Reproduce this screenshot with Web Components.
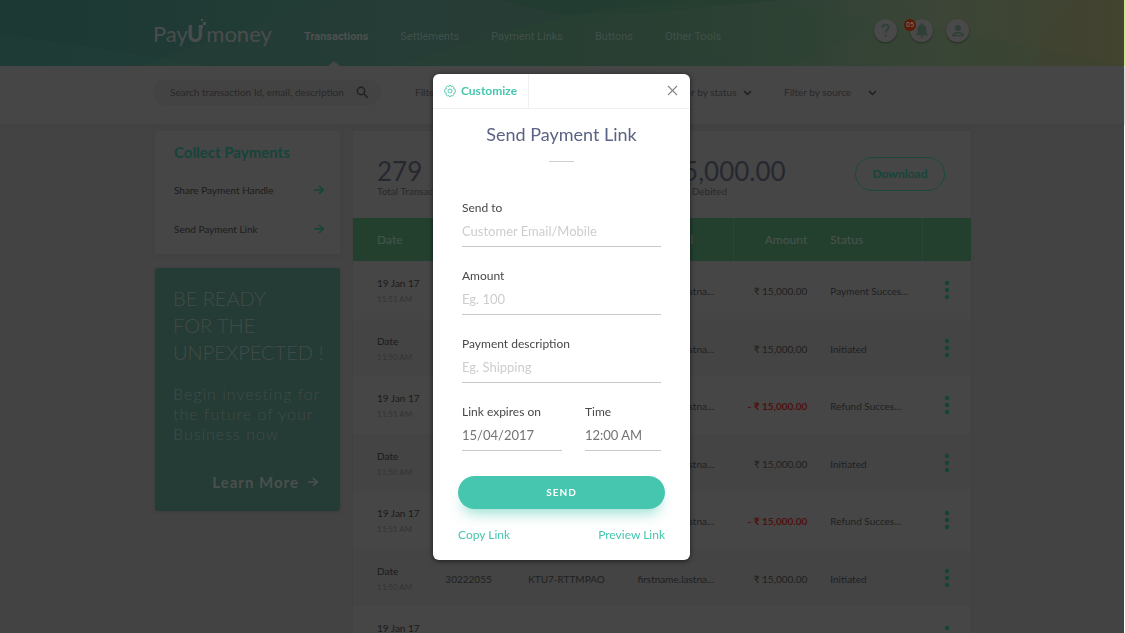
<!DOCTYPE html>
<html lang="en">
<head>
<meta charset="utf-8">
<meta name="viewport" content="width=device-width, initial-scale=1">
<title>PayUmoney – Send Payment Link</title>
<style>
  html, body { margin: 0; height: 100%; }
  body { font-family: Lato, "Liberation Sans", sans-serif; background: #fff; color: #222; overflow: hidden; }
</style>
</head>
<body>
<pay-app></pay-app>

<script>
const define = (name, html, setup) => {
  const template = document.createElement('template');
  template.innerHTML = html;
  customElements.define(name, class extends HTMLElement {
    constructor() {
      super();
      this.attachShadow({ mode: 'open' }).append(template.content.cloneNode(true));
    }
    connectedCallback() { if (setup) setup(this, this.shadowRoot); }
  });
};

define('pay-logo', `
  <style>
    :host { display: block; }
    a { display: flex; align-items: baseline; position: relative; color: #4b4d4c; text-decoration: none; font: 400 22px/28px Lato, sans-serif; }
    b { font-weight: 900; margin: 0 3px 0 -1px; }
    svg { position: absolute; left: 46px; top: -1px; }
  </style>
  <a href="#" aria-label="PayUmoney"><span>Pay</span><b>U</b><span>money</span>
    <svg width="8" height="9" viewBox="0 0 8 9" fill="#4b4d4c" aria-hidden="true"><path d="M2 0h2v2H2zM4 3h3v3H4zM0 6h4v3H0z"/></svg>
  </a>`);

define('nav-link', `
  <style>
    :host { display: flex; position: relative; align-items: center; }
    a { color: #42504a; text-decoration: none; font: 400 11px/16px Roboto, sans-serif; }
    :host([current]) a { color: #4d504f; font-weight: 700; }
    :host([current])::after { content: ""; position: absolute; left: 50%; bottom: 0; margin-left: -8px; border: 6px solid transparent; border-top: 0; border-bottom: 5px solid #464646; }
  </style>
  <a href="#"><slot></slot></a>`);

define('round-button', `
  <style>
    :host { display: block; position: relative; }
    button { display: grid; place-items: center; width: 23px; height: 23px; padding: 0; border: 0; border-radius: 50%; background: #484948; color: #2f3f36; box-shadow: 0 1px 2px #0005; }
    span { position: absolute; left: -6px; top: 0; width: 12px; height: 12px; border-radius: 50%; background: #591d05; color: #94705f; font: 400 7px/12px Roboto, sans-serif; text-align: center; }
    span:empty { display: none; }
  </style>
  <button type="button"><slot></slot></button><span></span>`,
  (host, root) => {
    root.querySelector('button').setAttribute('aria-label', host.getAttribute('label'));
    root.querySelector('span').textContent = host.getAttribute('count') || '';
  });

define('app-header', `
  <style>
    :host { display: block; position: relative; background: linear-gradient(90deg, #1c3933, #233c36 30%, #253c33 50%, #2f4235 72%, #3b4537 82%, #444430); border-right: 1px solid #cdee8c; }
    .art { position: absolute; inset: 0; width: 100%; height: 100%; }
    .in { position: relative; display: flex; max-width: 818px; height: 66px; margin: 0 auto; }
    pay-logo { padding-top: 20px; width: 151px; }
    nav { display: flex; gap: 32px; padding-top: 7px; }
    .tools { display: flex; gap: 13px; margin-left: auto; padding: 19px 2px 0 0; }
  </style>
  <svg class="art" viewBox="0 0 1124 66" preserveAspectRatio="none" aria-hidden="true">
    <path d="M140 66Q260 20 350 0H520Q650 40 740 66z" fill="#2a4039" opacity=".3"/>
    <path d="M0 34Q100 48 210 66H0z" fill="#24423a" opacity=".25"/>
    <path d="M500 0H780L640 14 560 14z" fill="#1d3b2d" opacity=".35"/>
    <path d="M400 66Q560 4 690 2T1124 66z" fill="#2c4433" opacity=".2"/>
    <path d="M790 66 930 0H1124V66z" fill="#3e4836" opacity=".2"/>
    <path d="M1035 66Q1040 20 1075 0H1124V66z" fill="#484529" opacity=".15"/>
  </svg>
  <div class="in">
    <pay-logo></pay-logo>
    <nav aria-label="Main">
      <nav-link current>Transactions</nav-link><nav-link>Settlements</nav-link><nav-link>Payment Links</nav-link><nav-link>Buttons</nav-link><nav-link>Other Tools</nav-link>
    </nav>
    <div class="tools">
      <round-button label="Help"><svg width="15" height="15" viewBox="0 0 15 15" fill="none" stroke="currentColor" stroke-width="1.800"><path d="M4.400 4.600C4.500 2.600 5.800 1.600 7.500 1.600s3.100 1.100 3.100 2.800c0 2.300-3.100 2.400-3.100 5.200"/><path d="M7.500 11.800v2"/></svg></round-button>
      <round-button label="Notifications" count="05"><svg width="14" height="15" viewBox="0 0 14 15" fill="currentColor"><path d="M7 14.600c.9 0 1.500-.6 1.500-1.400h-3c0 .8.6 1.400 1.500 1.400zM11.400 10V6.400C11.400 4.200 10.200 2.500 8.200 2V1.500a1.200 1.200 0 0 0-2.400 0V2C3.800 2.500 2.600 4.200 2.600 6.400V10L1.200 11.500v.8h11.600v-.8z"/></svg></round-button>
      <round-button label="Account"><svg width="14" height="14" viewBox="0 0 14 14" fill="currentColor"><circle cx="7" cy="4" r="2.900"/><path fill-rule="evenodd" d="M1.300 12.300v-1.500C1.300 8.900 5.100 8 7 8s5.700.9 5.700 2.800v1.500zm1.700-1.400h8C10.600 10.100 8.500 9.400 7 9.400s-3.600.7-4 1.500z"/></svg></round-button>
    </div>
  </div>`);

define('filter-select', `
  <style>
    :host { display: grid; align-items: center; }
    select, svg { grid-area: 1 / 1; }
    select { appearance: none; border: 0; padding: 0; margin: 0; background: none; color: #292929; font: 400 10px/16px Lato, sans-serif; }
    svg { justify-self: end; pointer-events: none; margin-top: 2px; }
  </style>
  <select><option></option></select>
  <svg width="9" height="6" viewBox="0 0 9 6" fill="none" stroke="#1e1e1e" stroke-width="1.500" aria-hidden="true"><path d="M1 1l3.500 3.500L8 1"/></svg>`,
  (host, root) => {
    root.querySelector('select').setAttribute('aria-label', host.getAttribute('label'));
    root.querySelector('option').textContent = host.getAttribute('label');
  });

define('filter-bar', `
  <style>
    :host { display: block; background: #464646; box-shadow: 0 1px 2px #40404088; }
    .in { display: flex; align-items: center; max-width: 818px; margin: 0 auto; padding-bottom: 6px; height: 52px; }
    form { display: flex; align-items: center; width: 228px; height: 25px; box-sizing: border-box; padding: 0 12px 0 17px; border-radius: 13px; background: #434343; margin-right: 34px; }
    input { flex: 1; min-width: 0; border: 0; padding: 0; background: none; font: 400 10px/16px Lato, sans-serif; color: #252525; }
    input::placeholder { color: #282828; opacity: 1; }
    button { border: 0; background: none; padding: 0; display: flex; }
    filter-select:nth-of-type(1) { width: 120px; margin-right: 137px; }
    filter-select:nth-of-type(2) { width: 80px; margin-right: 32px; }
    filter-select:nth-of-type(3) { width: 93px; }
  </style>
  <div class="in">
    <form role="search">
      <input type="search" aria-label="Search transactions" placeholder="Search transaction Id, email, description">
      <button type="button" aria-label="Search"><svg width="13" height="13" viewBox="0 0 13 13" fill="none" stroke="#1f1f1f" stroke-width="1.400"><circle cx="5" cy="5" r="3.700"/><path d="M7.800 7.800l4 4"/></svg></button>
    </form>
    <filter-select label="Filter by date"></filter-select>
    <filter-select label="Filter by status"></filter-select>
    <filter-select label="Filter by source"></filter-select>
  </div>`);

define('arrow-icon', `
  <style>:host { display: inline-flex; }</style>
  <svg width="12" height="10" viewBox="0 0 12 10" fill="none" stroke="currentColor" stroke-width="1.700" aria-hidden="true"><path d="M1 5h9M6 1l4.200 4L6 9"/></svg>`);

define('collect-card', `
  <style>
    :host { display: block; box-sizing: border-box; height: 123px; padding: 11px 15px 0 19px; background: #464646; border-radius: 2px; box-shadow: 0 1px 4px #404040; }
    h2 { margin: 0 0 20px; font: 700 15px/20px Lato, sans-serif; color: #15443a; }
    a { display: flex; justify-content: space-between; align-items: center; color: #1c1c1c; text-decoration: none; font: 400 10px/16px Lato, sans-serif; margin-bottom: 23px; }
    arrow-icon { color: #15443a; }
  </style>
  <h2>Collect Payments</h2>
  <a href="#"><span>Share Payment Handle</span><arrow-icon></arrow-icon></a>
  <a href="#"><span>Send Payment Link</span><arrow-icon></arrow-icon></a>`);

define('promo-card', `
  <style>
    :host { display: block; box-sizing: border-box; height: 243px; padding: 17px 0 0 18px; background: #243c35; border-radius: 3px; box-shadow: 0 1px 3px #3338; color: #434b48; }
    h2 { margin: 0 0 18px; font: 300 20px/27px Lato, sans-serif; white-space: nowrap; }
    p { margin: 0; font: 300 16px/20px Lato, sans-serif; letter-spacing: 1px; white-space: nowrap; }
    a { display: flex; justify-content: flex-end; align-items: center; gap: 8px; margin: 26px 21px 0 0; color: #4b4f4d; text-decoration: none; font: 700 15px/24px Lato, sans-serif; letter-spacing: 1px; }
  </style>
  <h2>BE READY<br>FOR THE<br>UNPEXPECTED !</h2>
  <p>Begin investing for<br>the future of your<br>Business now</p>
  <a href="#">Learn More <arrow-icon></arrow-icon></a>`);

define('pay-stat', `
  <style>
    :host { display: block; color: #292929; font: 400 10px/12px Lato, sans-serif; }
    strong { display: block; font: 400 26px/28px Lato, sans-serif; color: #262830; }
  </style>
  <strong><slot name="value"></slot></strong><slot></slot>`);

define('transactions-table', `
  <style>
    :host { display: block; }
    table { width: 100%; table-layout: fixed; border-collapse: collapse; font: 400 10px/16px Lato, sans-serif; color: #202020; }
    th { height: 43px; padding: 0 0 0 12px; box-sizing: border-box; text-align: left; font: 500 12px/16px Lato, sans-serif; color: #46524c; background: #23402f; }
    th.rule { border-left: 1px solid #294535; }
    th:first-child, td:first-child { padding-left: 24px; }
    td { height: 58px; box-sizing: border-box; padding: 2px 0 0 12px; white-space: nowrap; }
    tr:nth-child(even) td { height: 57px; background: #444; }
    td:first-child { vertical-align: top; padding-top: 14px; color: #1a1a1a; }
    td small { display: block; font-size: 8px; color: #343434; }
    th.amount, td.amount { text-align: right; padding-right: 11px; }
    td.neg { color: #500f0f; font-weight: 700; }
    td.act { padding: 0; text-align: center; }
    button { border: 0; padding: 0; background: none; color: #154438; display: inline-flex; vertical-align: middle; }
  </style>
  <table>
    <colgroup><col style="width:13%"><col style="width:13.400%"><col style="width:17.700%"><col style="width:17.400%"><col style="width:13.800%"><col style="width:16.800%"><col></colgroup>
    <thead><tr><th scope="col">Date</th><th scope="col" aria-label="ID"></th><th scope="col" aria-label="Reference"></th><th scope="col">User Email</th><th scope="col" class="rule amount">Amount</th><th scope="col">Status</th><th class="rule"></th></tr></thead>
    <tbody></tbody>
  </table>`,
  (host, root) => {
    const email = 'firstname.lastna...', amount = '₹ 15,000.00';
    const rows = [
      ['19 Jan 17', '11:51 AM', '', '', email, amount, 'Payment Succes...'],
      ['Date', '11:50 AM', '', '', email, amount, 'Initiated'],
      ['19 Jan 17', '11:51 AM', '', '', email, amount, 'Refund Succes...'],
      ['Date', '11:50 AM', '', '', email, amount, 'Initiated'],
      ['19 Jan 17', '11:51 AM', '', '', email, amount, 'Refund Succes...'],
      ['Date', '11:50 AM', '30222055', 'KTU7-RTTMPAO', email, amount, 'Initiated'],
      ['19 Jan 17', '', '', '', '', '', '']
    ];
    root.querySelector('tbody').innerHTML = rows.map(([date, time, id, ref, mail, sum, status]) => {
      const neg = status.startsWith('Refund');
      return `<tr><td>${date}<small>${time}</small></td><td>${id}</td><td>${ref}</td><td>${mail}</td>
        <td class="amount${neg ? ' neg' : ''}">${neg ? '- ' : ''}${sum}</td><td>${status}</td>
        <td class="act"><button type="button" aria-label="Row actions"><svg width="6" height="20" viewBox="0 0 6 20" fill="currentColor"><circle cx="3" cy="3" r="2.200"/><circle cx="3" cy="10" r="2.200"/><circle cx="3" cy="17" r="2.200"/></svg></button></td></tr>`;
    }).join('');
  });

define('transactions-panel', `
  <style>
    :host { display: block; background: #464646; box-shadow: 0 0 4px #404040; }
    .top { display: flex; height: 61px; padding: 26px 26px 0 24px; }
    pay-stat:first-child { width: 291px; }
    button { margin: 0 0 0 auto; width: 90px; height: 34px; box-sizing: border-box; border: 1px solid #1b4a3d; border-radius: 17px; background: none; color: #164539; font: 700 12px/16px Lato, sans-serif; padding: 0; }
  </style>
  <div class="top">
    <pay-stat><span slot="value">279</span>Total Transactions</pay-stat>
    <pay-stat><span slot="value">15,000.00</span>Total Debited</pay-stat>
    <button type="button">Download</button>
  </div>
  <transactions-table></transactions-table>`);

define('form-field', `
  <style>
    :host { display: block; min-width: 0; }
    label { display: block; font: 400 12px/16px Lato, sans-serif; color: #484848; }
    input { display: block; width: 100%; height: 31px; box-sizing: border-box; margin: 0; padding: 0; border: 0; border-bottom: 1px solid #c9c9c9; border-radius: 0; background: none; color: #747474; font: 400 13px/20px Lato, sans-serif; outline: 0; }
    input::placeholder { color: #cdcdcd; opacity: 1; }
  </style>
  <label for="f"></label><input id="f" type="text">`,
  (host, root) => {
    const input = root.querySelector('input');
    root.querySelector('label').textContent = host.getAttribute('label');
    input.placeholder = host.getAttribute('placeholder') || '';
    input.value = host.getAttribute('value') || '';
  });

define('link-dialog', `
  <style>
    :host { position: fixed; inset: 0 2px 0 0; display: flex; align-items: center; justify-content: center; }
    section { width: 257px; background: #fff; border-radius: 6px; box-shadow: 0 1px 5px #0009; }
    header { display: flex; align-items: center; justify-content: space-between; height: 34px; border-bottom: 1px solid #f0f0f0; }
    header button { display: flex; align-items: center; border: 0; background: none; }
    .custom { gap: 5px; height: 34px; padding: 0 11px; border-right: 1px solid #f0f0f0; color: #46c6ae; font: 700 12px/16px Lato, sans-serif; }
    .close { padding: 0; margin-right: 12px; }
    h1 { margin: 13px 0 15px; text-align: center; font: 400 18px/24px Lato, sans-serif; color: #5a6383; }
    hr { width: 25px; height: 1px; margin: 0 auto 38px; border: 0; background: #cfcfcf; }
    form { display: grid; gap: 21px; padding: 0 29px; }
    .row { display: grid; grid-template-columns: 100fr 76fr; gap: 23px; }
    .send { height: 33px; margin: 4px -4px 0; border: 0; border-radius: 17px; background: #46c6ae; color: #fff; font: 700 10px/16px Lato, sans-serif; letter-spacing: 1px; box-shadow: 0 9px 14px -5px #46c6ae90; }
    footer { display: flex; justify-content: space-between; padding: 18px 25px 17px; font: 400 12px/16px Lato, sans-serif; }
    a { color: #46c6ae; text-decoration: none; }
  </style>
  <section role="dialog" aria-modal="true" aria-labelledby="t">
    <header>
      <button type="button" class="custom"><svg width="12" height="12" viewBox="0 0 12 12" fill="none" stroke="currentColor" stroke-width=".9" stroke-linejoin="round" aria-hidden="true"><path d="M5 .6h2l.4 1.200 1.200-.6L10 2.400l-.5 1.200 1.400.4.500 2-.5 1.900-1.400.4.500 1.300-1.400 1.300-1.200-.5L7 11.400H5l-.4-1.200-1.200.6L2 9.600l.5-1.300-1.400-.4L.6 6l.5-2 1.400-.4L2 2.400l1.400-1.200 1.200.6z"/><circle cx="6" cy="6" r="2"/></svg>Customize</button>
      <button type="button" class="close" aria-label="Close"><svg width="11" height="11" viewBox="0 0 11 11" stroke="#858585" stroke-width="1.100"><path d="M1 1l9 9M10 1l-9 9"/></svg></button>
    </header>
    <h1 id="t">Send Payment Link</h1>
    <hr>
    <form>
      <form-field label="Send to" placeholder="Customer Email/Mobile"></form-field>
      <form-field label="Amount" placeholder="Eg. 100"></form-field>
      <form-field label="Payment description" placeholder="Eg. Shipping"></form-field>
      <div class="row">
        <form-field label="Link expires on" value="15/04/2017"></form-field>
        <form-field label="Time" value="12:00 AM"></form-field>
      </div>
      <button type="button" class="send">SEND</button>
    </form>
    <footer><a href="#">Copy Link</a><a href="#">Preview Link</a></footer>
  </section>`);

define('pay-app', `
  <style>
    :host { display: block; height: 100vh; overflow: hidden; }
    .page { margin-right: 1px; background: #434343; min-height: 100%; }
    main { display: grid; grid-template-columns: 185px minmax(0, 1fr); gap: 13px; align-items: start; box-sizing: border-box; max-width: 818px; margin: 0 auto; padding: 7px 0 0 2px; }
    aside { display: grid; grid-template-columns: minmax(0, 1fr); gap: 14px; }
  </style>
  <app-header></app-header>
  <div class="page">
    <filter-bar></filter-bar>
    <main>
      <aside><collect-card></collect-card><promo-card></promo-card></aside>
      <transactions-panel></transactions-panel>
    </main>
  </div>
  <link-dialog></link-dialog>`);
</script>
</body>
</html>
